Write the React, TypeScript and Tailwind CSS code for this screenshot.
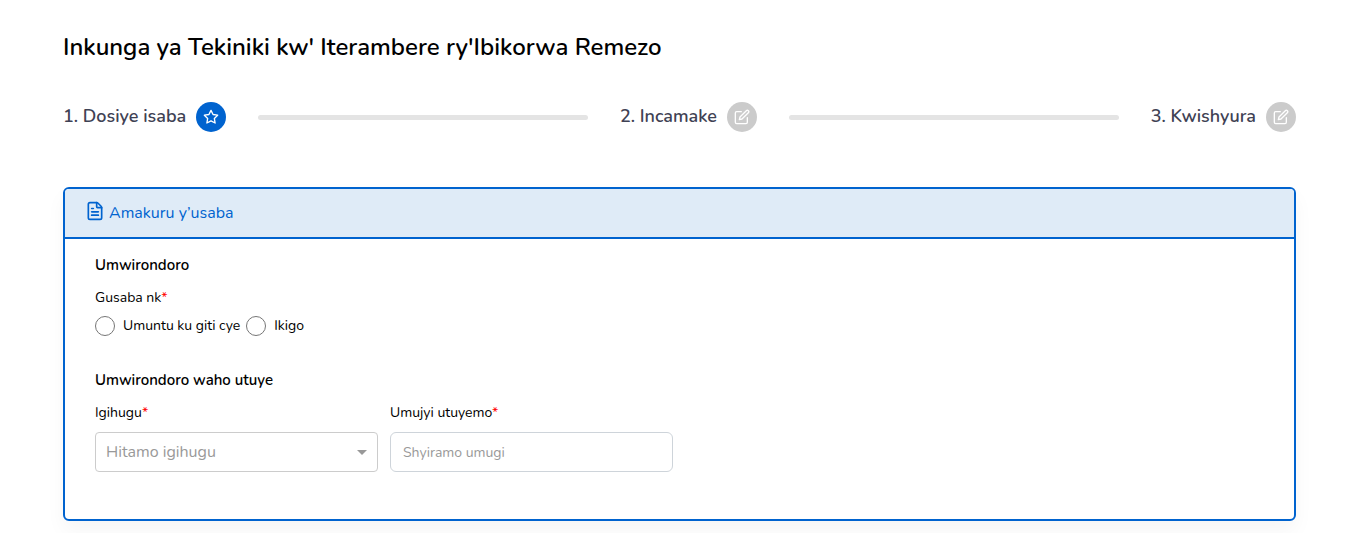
import { Fragment } from 'react'
import { FiEdit, FiStar } from 'react-icons/fi'
import { FileText } from 'lucide-react'

const steps = [
  { label: '1. Dosiye isaba', active: true },
  { label: '2. Incamake', active: false },
  { label: '3. Kwishyura', active: false },
]

const applicants = ['Umuntu ku giti cye', 'Ikigo']

function Steps() {
  return (
    <ol className="mt-10 flex items-center gap-8">
      {steps.map((step, i) => (
        <Fragment key={step.label}>
          {i > 0 && <li aria-hidden="true" className="h-[5px] flex-1 rounded-full bg-[#e4e4e4]" />}
          <li className="flex items-center gap-2.5">
            <span className="pb-0.5 text-lg font-semibold text-[#3f4254]">{step.label}</span>
            <span
              className={`flex size-[30px] items-center justify-center rounded-full text-white ${
                step.active ? 'bg-[#0063cf]' : 'bg-[#cbcbcb]'
              }`}
            >
              {step.active ? <FiStar className="size-4" /> : <FiEdit className="size-4" />}
            </span>
          </li>
        </Fragment>
      ))}
    </ol>
  )
}

function Required() {
  return <span className="text-[#ff0000]">*</span>
}

export default function App() {
  return (
    <main className="px-[52px] pt-8 pb-3 pl-[63px] font-['Nunito','Open_Sans',sans-serif] text-black">
      <h1 className="text-2xl leading-[30px] font-semibold">
        Inkunga ya Tekiniki kw' Iterambere ry'Ibikorwa Remezo
      </h1>
      <Steps />

      <section className="mt-[55px] rounded-md border-2 border-[#0063cf] bg-white shadow-[0_10px_20px_rgba(0,0,0,0.04)]">
        <header className="flex h-[50px] items-center gap-1 rounded-t border-b-2 border-[#0063cf] bg-[#dfebf7] px-5 text-[#0063cf]">
          <FileText className="mb-1 size-5" />
          <h2 className="text-base">Amakuru y’usaba</h2>
        </header>

        <form className="px-[30px] pt-4 pb-[47px] text-sm">
          <h3 className="text-[15px] leading-5 font-semibold">Umwirondoro</h3>
          <fieldset className="mt-[13px]">
            <legend className="leading-5">
              Gusaba nk
              <Required />
            </legend>
            <div className="mt-2 flex gap-1.5">
              {applicants.map((name) => (
                <label key={name} className="flex items-center gap-2">
                  <input
                    type="radio"
                    name="applicant"
                    className="size-5 appearance-none rounded-full border border-[#767676] checked:bg-[#0063cf]"
                  />
                  {name}
                </label>
              ))}
            </div>
          </fieldset>

          <h3 className="mt-[34px] text-[15px] leading-5 font-semibold">Umwirondoro waho utuye</h3>
          <div className="mt-[13px] flex gap-3">
            <div className="w-[283px]">
              <label htmlFor="country" className="block leading-5">
                Igihugu
                <Required />
              </label>
              <div className="relative mt-[9px]">
                <select
                  id="country"
                  className="h-10 w-full appearance-none rounded border border-[#cccccc] bg-white px-2.5 text-base text-[#999999]"
                >
                  <option>Hitamo igihugu</option>
                </select>
                <svg
                  viewBox="0 0 10 5"
                  className="pointer-events-none absolute top-[18px] right-[11px] h-[5px] w-2.5 fill-[#999999]"
                >
                  <path d="M0 0h10L5 5z" />
                </svg>
              </div>
            </div>
            <div className="w-[283px]">
              <label htmlFor="city" className="block leading-5">
                Umujyi utuyemo
                <Required />
              </label>
              <input
                id="city"
                type="text"
                placeholder="Shyiramo umugi"
                className="mt-[9px] h-10 w-full rounded-md border border-[#ced4da] px-3 placeholder:text-[#999999]"
              />
            </div>
          </div>
        </form>
      </section>
    </main>
  )
}
